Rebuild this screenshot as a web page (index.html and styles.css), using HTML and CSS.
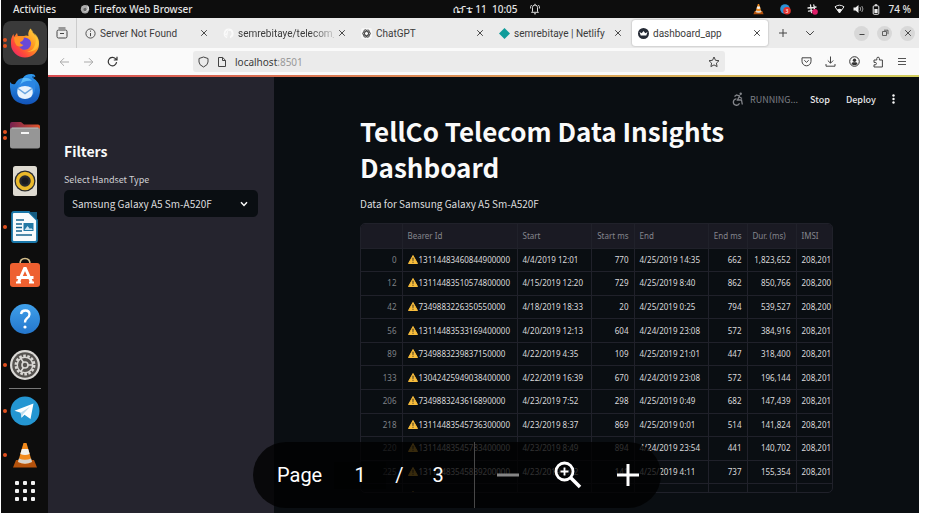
FILE: index.html
```html
<!DOCTYPE html>
<html lang="en">
<head>
<meta charset="utf-8">
<title>dashboard_app</title>
<link rel="stylesheet" href="styles.css">
</head>
<body>
<svg class="defs" aria-hidden="true">
  <defs>
    <symbol id="warn" viewBox="0 0 20 18"><path d="M10 1 19 17H1Z" fill="#f8bd3c" stroke="#f8bd3c" stroke-width="2" stroke-linejoin="round"/><path d="M8.800 5.500h2.400l-.4 6.500H9.200zM9 13.500h2v2H9z" fill="#3a3420"/></symbol>
    <symbol id="x" viewBox="0 0 8 8"><path d="M1.200 1.200l5.600 5.600M6.800 1.200 1.200 6.800" stroke="#4a4a4a" stroke-width="1" fill="none"/></symbol>
    <linearGradient id="fx" x1="1" y1="0" x2="0" y2="1"><stop offset="0" stop-color="#ffe14a"/><stop offset=".4" stop-color="#ff9a1f"/><stop offset=".7" stop-color="#ff4a3a"/><stop offset="1" stop-color="#e5187c"/></linearGradient>
    <linearGradient id="tb" x1="0" y1="0" x2="0" y2="1"><stop offset="0" stop-color="#2f9bf0"/><stop offset="1" stop-color="#1253b8"/></linearGradient>
    <linearGradient id="fold" x1="0" y1="0" x2="1" y2="0"><stop offset="0" stop-color="#75204f"/><stop offset="1" stop-color="#e2562b"/></linearGradient>
    <linearGradient id="blue" x1="0" y1="0" x2="0" y2="1"><stop offset="0" stop-color="#3fa0ea"/><stop offset="1" stop-color="#2476cc"/></linearGradient>
    <symbol id="cone" viewBox="0 0 26 28"><path d="M4 19h18l3 7.500H1z" fill="#b5520c"/><path d="M11.500 2h3L20 21q-7 3.500-14 0z" fill="#f28a1c"/><path d="M9.800 8h6.400l1.500 5q-4.700 2-9.400 0z" fill="#f1f1ee"/><path d="M6.900 17.500q6.100 2.500 12.200 0L20 21q-7 3.500-14 0z" fill="#d7d3cd"/></symbol>
  </defs>
</svg>
<div class="desktop">
  <header class="topbar">
    <div class="topbar-left">
      <span>Activities</span>
      <span class="app-name"><svg width="10" height="10" viewBox="0 0 10 10"><circle cx="5" cy="5.300" r="4.200" fill="#a9a9a9"/><path d="M.8 1.500 3 3l2 .5-2 2 2 2.500 3-1.500L7.500 3 6.500.500 9 3v3" fill="#d8d8d8"/><circle cx="5" cy="5.500" r="1.700" fill="#666"/></svg>Firefox Web Browser</span>
    </div>
    <div class="clock"><span>ሴፕቴ 11&nbsp; 10:05</span><svg width="10" height="12" viewBox="0 0 10 12" fill="none" stroke="#ddd" stroke-width="1"><path d="M2.500 8.500V4.500a2.500 2.500 0 0 1 5 0v4l1 .8h-7zM4 10.800h2M.6 5.500V3.500l1-1.500M9.400 5.500V3.500L8.400 2M5 2V.800"/></svg></div>
    <div class="tray">
      <svg class="tray-app" width="11" height="12"><use href="#cone"/></svg>
      <svg class="tray-app" width="11" height="11" viewBox="0 0 11 11"><circle cx="5" cy="5" r="4.800" fill="#2b93d6"/><circle cx="7" cy="6.800" r="3.800" fill="#e4342f"/><text x="7" y="9" font-size="5" fill="#fff" text-anchor="middle">3</text></svg>
      <svg class="tray-app" width="11" height="11" viewBox="0 0 11 11" stroke="#e8e8e8" stroke-width="1.300" stroke-linecap="round"><path d="M3.500 1l1 7.500M6.800 1l.7 4M1 4l8-1M1.500 7.200l4-.5"/><circle cx="8" cy="7.800" r="2.200" fill="#e01e6a" stroke="#e01e6a"/></svg>
      <svg width="11" height="10" viewBox="0 0 11 10"><path d="M1 2.800q4.500-3.200 9 0L5.500 9z" fill="none" stroke="#eee"/><path d="M3 5.500q2.500-1.600 5 0L5.500 9z" fill="#eee"/></svg>
      <svg width="11" height="10" viewBox="0 0 11 10"><path d="M.500 3.500h2L5.500 1v8l-3-2.500h-2z" fill="#eee"/><path d="M7 3q1.500 2 0 4M8.800 2q2.300 3 0 6" fill="none" stroke="#aaa" stroke-width=".9"/></svg>
      <svg width="8" height="11" viewBox="0 0 8 11"><rect x="1.200" y="1.800" width="5.600" height="8.500" rx="1" fill="none" stroke="#eee"/><path d="M2.800.300h2.400v1.500H2.800zM2.400 5h3.200v4H2.400z" fill="#eee"/></svg>
      <span>74 %</span>
    </div>
  </header>

  <nav class="dock" aria-label="Dock">
    <div class="dock-item focused two"><svg width="30" height="30" viewBox="0 0 30 30"><path d="M20.500.500Q22 4 25 7q4 3.500 4 9a14 13.500 0 0 1-28 0q-.5-6 2.500-10l.5 3 3-4 .8 3L14 8q2-1 4.500 0Q17.500 4 20.500.500z" fill="url(#fx)"/><path d="M9 12q6-5 11 0 2 3 .5 6-3 5-8 3.500Q7 19 9 12z" fill="#6a49d6"/><path d="M4 9.500q6-2 10 .500-1 3.500-4 4 0 2 3.500 3-3 3-7 .500Q4 14 4 9.500z" fill="#ff9126"/><path d="M20.500.500Q28 8 25 17q-2 6-8 6.500 8 1 11-5 3-8-4-13.500-3-2-3.500-4.500z" fill="#ffc936" opacity=".75"/></svg></div>
    <div class="dock-item"><svg width="32" height="32" viewBox="0 0 32 32"><path d="M1 9q2 3 5 2Q9 5 14 5q2-4 8.500-4 3 0 4 2.200L24 5q7 4 7 12 0 14-14 14.500Q3 30 1.500 18q-.8-4-.5-9z" fill="url(#tb)"/><path d="M14 5q9-3 12 6 1.500 8-4 13-9 4-13-3-2-9 5-16z" fill="#2b86e4"/><path d="M14 5q6-1 9 3-8-1-12 4z" fill="#5cbbfa"/><path d="M9 15q7-4 14 0 2 5-1 9-6 4-12 0-3-4-1-9z" fill="#e8f2fc"/><path d="M9 15.500l7 5 7-5" fill="none" stroke="#6aa5df" stroke-width="1.500"/><circle cx="24" cy="4" r=".8" fill="#0d2d66"/></svg></div>
    <div class="dock-item two"><svg width="32" height="28" viewBox="0 0 32 28"><path d="M1 3q0-2 2-2h9l3 2.500h14q2 0 2 2V15H1z" fill="url(#fold)"/><rect x="1" y="6.500" width="30" height="21" rx="2.500" fill="#969696"/><path d="M3 7.200h26" stroke="#b5b5b5"/><rect x="12" y="11" width="8" height="2" fill="#f5f5f5"/></svg></div>
    <div class="dock-item"><svg width="26" height="32" viewBox="0 0 26 32"><rect x="1" y="1" width="24" height="30" rx="2.500" fill="#dedad0"/><circle cx="13" cy="16" r="10.500" fill="#282a30"/><circle cx="13" cy="16" r="7.500" fill="none" stroke="#eab92b" stroke-width="3.500"/><circle cx="13" cy="16" r="3.500" fill="#191a20"/></svg></div>
    <div class="dock-item one"><svg width="28" height="32" viewBox="0 0 28 32"><path d="M3 1h15l8 8v20q0 2-2 2H3q-2 0-2-2V3q0-2 2-2z" fill="#f8fbfc" stroke="#1a78aa" stroke-width="1.800"/><path d="M18 1h8v8z" fill="#155b80"/><path d="M5 9h8M5 13h6M5 16.500h6M5 20h6M5 24h16" stroke="#17658f" stroke-width="1.700"/><rect x="12.500" y="12" width="10" height="8" fill="#2379a5"/><path d="M13.500 19l3-4 2.500 3 1-1 2 2z" fill="#cfe7f4"/></svg></div>
    <div class="dock-item"><svg width="32" height="32" viewBox="0 0 32 32"><path d="M11 7q0-5.500 5-5.500T21 7" fill="none" stroke="#d3bd8a" stroke-width="1.600"/><rect x="1" y="6" width="30" height="24" rx="3" fill="#ee6030"/><path d="M16 10.500 9.500 25M16 10.500 22.500 25M7.500 20.500h17" stroke="#fff" stroke-width="3" fill="none"/><path d="M7 25.500h5M20 25.500h5" stroke="#fff" stroke-width="2"/></svg></div>
    <div class="dock-item"><svg width="32" height="32" viewBox="0 0 32 32"><circle cx="16" cy="16" r="15" fill="url(#blue)"/><path d="M12 11q.5-3.500 4.300-3.500 4.200 0 4.200 3.700 0 2.300-2.700 4.300-1.800 1.500-1.800 4" fill="none" stroke="#fff" stroke-width="2.300"/><circle cx="16" cy="24" r="1.600" fill="#fff"/></svg></div>
    <div class="dock-item one"><svg width="32" height="32" viewBox="0 0 32 32"><circle cx="16" cy="16" r="15" fill="#dad8d5"/><circle cx="16" cy="16" r="12.800" fill="#55524f"/><circle cx="16" cy="16" r="9.200" fill="none" stroke="#dad8d5" stroke-width="2.500" stroke-dasharray="2.600 1.530"/><circle cx="16" cy="16" r="7.700" fill="none" stroke="#dad8d5" stroke-width="1.400"/><circle cx="16" cy="16" r="3" fill="none" stroke="#dad8d5" stroke-width="1.600"/><path d="M19 16h5M14.500 13.500 11.500 9M14.500 18.500 11.500 23" stroke="#dad8d5" stroke-width="1.500"/></svg></div>
    <hr class="dock-rule">
    <div class="dock-item one"><svg width="32" height="32" viewBox="0 0 32 32"><circle cx="16" cy="16" r="14.500" fill="#2496d2"/><path d="M5.500 15.800 24.500 8.500 21.500 24l-6-4.200-3 3-.8-5z" fill="#fff"/><path d="M11.700 17.800l9.500-6.300-7 7.500-1.700 3.800z" fill="#bcdcee"/></svg></div>
    <div class="dock-item one"><svg width="26" height="28"><use href="#cone"/></svg></div>
    <button class="apps" type="button" aria-label="Show applications"><i></i><i></i><i></i><i></i><i></i><i></i><i></i><i></i><i></i></button>
  </nav>

  <section class="browser">
    <div class="tabs">
      <button class="list-tabs" type="button" aria-label="List all tabs"><svg width="12" height="12" viewBox="0 0 12 12" fill="none" stroke="#444"><path d="M2.500 1h7" /><rect x="1" y="3" width="10" height="8" rx="1.500"/><path d="M4 6.500h4"/></svg></button>
      <div class="tab"><svg width="11" height="11" viewBox="0 0 11 11" fill="none" stroke="#444"><circle cx="5.500" cy="5.500" r="4.600" stroke-width=".9"/><path d="M5.500 5v3.200M5.500 2.600v1.100"/></svg><span class="tab-title">Server Not Found</span><button type="button" aria-label="Close tab"><svg width="8" height="8"><use href="#x"/></svg></button></div>
      <div class="tab"><svg width="11" height="11" viewBox="0 0 11 11"><path d="M5.500.500a5 5 0 0 0-1.500 9.700V8.600Q2.500 8.500 2.300 7.500M4 10.300V8Q2.500 7.300 2.500 5.500q0-2 1-2.500h4q1 .5 1 2.500T7 8v2.300A5 5 0 0 0 5.500.500z" fill="#fafafa"/></svg><span class="tab-title faded">semrebitaye/telecom_</span><button type="button" aria-label="Close tab"><svg width="8" height="8"><use href="#x"/></svg></button></div>
      <div class="tab"><svg width="11" height="11" viewBox="0 0 11 11"><rect width="11" height="11" rx="2" fill="#f6f6f6"/><g fill="none" stroke="#444" stroke-width=".9"><ellipse cx="5.500" cy="5.500" rx="4" ry="2"/><ellipse cx="5.500" cy="5.500" rx="4" ry="2" transform="rotate(60 5.500 5.500)"/><ellipse cx="5.500" cy="5.500" rx="4" ry="2" transform="rotate(120 5.500 5.500)"/></g></svg><span class="tab-title">ChatGPT</span><button type="button" aria-label="Close tab"><svg width="8" height="8"><use href="#x"/></svg></button></div>
      <div class="tab"><svg width="11" height="11" viewBox="0 0 11 11"><path d="M5.500 0 11 5.500 5.500 11 0 5.500z" fill="#109c9a"/></svg><span class="tab-title">semrebitaye | Netlify</span><button type="button" aria-label="Close tab"><svg width="8" height="8"><use href="#x"/></svg></button></div>
      <div class="tab active"><svg width="11" height="11" viewBox="0 0 11 11"><circle cx="5.500" cy="5.500" r="5.500" fill="#252a35"/><path d="M1.500 4l2.200 1.200L5.500 3l1.800 2.200L9.500 4 8.300 7.500H2.700z" fill="#fff"/></svg><span class="tab-title">dashboard_app</span><button type="button" aria-label="Close tab"><svg width="8" height="8"><use href="#x"/></svg></button></div>
      <button class="tab-tool" type="button" aria-label="New tab"><svg width="10" height="10" viewBox="0 0 10 10" stroke="#444"><path d="M5 1v8M1 5h8"/></svg></button>
      <button class="tab-tool" type="button" aria-label="Tab menu"><svg width="10" height="10" viewBox="0 0 10 10" fill="none" stroke="#444"><path d="M1.200 3.200 5 7l3.800-3.800"/></svg></button>
      <div class="window-buttons">
        <button type="button" aria-label="Minimize"><svg width="8" height="8" viewBox="0 0 8 8" stroke="#444"><path d="M1.500 5.500h5"/></svg></button>
        <button type="button" aria-label="Restore"><svg width="8" height="8" viewBox="0 0 8 8" fill="none" stroke="#555" stroke-width=".9"><path d="M1.500 2.500h4v4h-4zM3 1.200h4v4"/></svg></button>
        <button type="button" aria-label="Close"><svg width="8" height="8"><use href="#x"/></svg></button>
      </div>
    </div>
    <div class="toolbar">
      <div class="nav-buttons">
        <button type="button" aria-label="Back"><svg width="11" height="10" viewBox="0 0 11 10" fill="none" stroke="#aaa"><path d="M10 5H1M5 1.200 1.200 5 5 8.800"/></svg></button>
        <button type="button" aria-label="Forward"><svg width="11" height="10" viewBox="0 0 11 10" fill="none" stroke="#aaa"><path d="M1 5h9M6 1.200 9.800 5 6 8.800"/></svg></button>
        <button type="button" aria-label="Reload"><svg width="11" height="11" viewBox="0 0 11 11" fill="none" stroke="#333" stroke-width="1.200"><path d="M9.600 6.200A4.200 4.200 0 1 1 8.500 2.700L9.800 4M10 .800V4H6.800"/></svg></button>
      </div>
      <div class="urlbar">
        <svg width="11" height="12" viewBox="0 0 11 12" fill="none" stroke="#444"><path d="M5.500 1 10 2.500V6q0 3-4.500 5Q1 9 1 6V2.500z"/></svg>
        <svg width="10" height="12" viewBox="0 0 10 12" fill="none" stroke="#444"><path d="M1.500 1.500h4.200L8.500 4.300v6.200h-7zM5.500 1.500v3h3"/></svg>
        <a class="url" href="#">localhost<span>:8501</span></a>
        <svg width="12" height="12" viewBox="0 0 12 12" fill="none" stroke="#444"><path d="M6 1l1.500 3.300 3.500.4-2.600 2.400.7 3.500L6 8.900l-3.100 1.700.7-3.500L1 4.700l3.500-.4z"/></svg>
      </div>
      <div class="tool-buttons">
        <button type="button" aria-label="Pocket"><svg width="11" height="11" viewBox="0 0 11 11" fill="none" stroke="#444"><path d="M1 1.800h9v3.500a4.500 4.500 0 0 1-9 0zM3.300 4.300l2.200 2 2.200-2"/></svg></button>
        <button type="button" aria-label="Downloads"><svg width="11" height="11" viewBox="0 0 11 11" fill="none" stroke="#444"><path d="M5.500.500v6.500M2.800 4.500 5.500 7.200l2.700-2.700M1 8v2.200h9V8"/></svg></button>
        <button type="button" aria-label="Account"><svg width="11" height="11" viewBox="0 0 11 11"><circle cx="5.500" cy="5.500" r="4.800" fill="none" stroke="#333"/><circle cx="5.500" cy="4.200" r="1.700" fill="#333"/><path d="M2.500 8q.2-1.700 1.500-1.700h3Q8.300 6.300 8.500 8 5.500 10.500 2.500 8z" fill="#333"/></svg></button>
        <button type="button" aria-label="Extensions"><svg width="11" height="12" viewBox="0 0 11 12" fill="none" stroke="#444"><path d="M1 4h2.800V2.500a1.300 1.300 0 0 1 2.600 0V4h3v7H1V8.800h1.200a1.200 1.200 0 0 0 0-2.400H1z"/></svg></button>
        <button type="button" aria-label="Menu"><svg width="10" height="10" viewBox="0 0 10 10" stroke="#555"><path d="M1 1.500h8M1 4.500h8M1 7.500h8"/></svg></button>
      </div>
    </div>

    <div class="page">
      <aside class="sidebar">
        <h2>Filters</h2>
        <label for="handset">Select Handset Type</label>
        <div class="select">
          <select id="handset"><option>Samsung Galaxy A5 Sm-A520F</option></select>
          <svg width="8" height="6" viewBox="0 0 8 6" fill="none" stroke="#fafafa" stroke-width="1.500"><path d="M1 1.200 4 4.400l3-3.200"/></svg>
        </div>
      </aside>
      <main class="main">
        <div class="status">
          <svg width="12" height="14" viewBox="0 0 12 14" fill="none" stroke="#85878c" stroke-width="1.300"><circle cx="8.700" cy="1.800" r="1.200" fill="#85878c" stroke="none"/><path d="M2.500 4.500 4.500 3l3 1-2 4h4l.8 4.500M7.500 5l2.500 1.500M4.500 6.800a3.200 3.200 0 1 0 3 4.500"/></svg>
          <span class="running">RUNNING...</span>
          <button type="button">Stop</button>
          <button type="button">Deploy</button>
          <button type="button" aria-label="More"><svg width="3" height="10" viewBox="0 0 3 10" fill="#fafafa"><circle cx="1.500" cy="1.500" r="1.200"/><circle cx="1.500" cy="5" r="1.200"/><circle cx="1.500" cy="8.500" r="1.200"/></svg></button>
        </div>
        <div class="content">
          <h1>TellCo Telecom Data Insights Dashboard</h1>
          <p>Data for Samsung Galaxy A5 Sm-A520F</p>
          <div class="table-wrap">
            <table>
              <colgroup><col class="c-index"><col class="c-bearer"><col class="c-date"><col class="c-start-ms"><col class="c-date"><col class="c-end-ms"><col class="c-dur"><col class="c-imsi"></colgroup>
              <thead><tr><th></th><th>Bearer Id</th><th>Start</th><th class="num">Start ms</th><th>End</th><th class="num">End ms</th><th>Dur. (ms)</th><th>IMSI</th></tr></thead>
              <tbody>
                <tr><td>0</td><td><svg><use href="#warn"/></svg>13114483460844900000</td><td>4/4/2019 12:01</td><td>770</td><td>4/25/2019 14:35</td><td>662</td><td>1,823,652</td><td>208,201</td></tr>
                <tr><td>12</td><td><svg><use href="#warn"/></svg>13114483510574800000</td><td>4/15/2019 12:20</td><td>729</td><td>4/25/2019 8:40</td><td>862</td><td>850,766</td><td>208,200</td></tr>
                <tr><td>42</td><td><svg><use href="#warn"/></svg>7349883226350550000</td><td>4/18/2019 18:33</td><td>20</td><td>4/25/2019 0:25</td><td>794</td><td>539,527</td><td>208,200</td></tr>
                <tr><td>56</td><td><svg><use href="#warn"/></svg>13114483533169400000</td><td>4/20/2019 12:13</td><td>604</td><td>4/24/2019 23:08</td><td>572</td><td>384,916</td><td>208,201</td></tr>
                <tr><td>89</td><td><svg><use href="#warn"/></svg>7349883239837150000</td><td>4/22/2019 4:35</td><td>109</td><td>4/25/2019 21:01</td><td>447</td><td>318,400</td><td>208,201</td></tr>
                <tr><td>133</td><td><svg><use href="#warn"/></svg>13042425949038400000</td><td>4/22/2019 16:39</td><td>670</td><td>4/24/2019 23:08</td><td>572</td><td>196,144</td><td>208,201</td></tr>
                <tr><td>206</td><td><svg><use href="#warn"/></svg>7349883243616890000</td><td>4/23/2019 7:52</td><td>298</td><td>4/25/2019 0:49</td><td>682</td><td>147,439</td><td>208,201</td></tr>
                <tr><td>218</td><td><svg><use href="#warn"/></svg>13114483545736300000</td><td>4/23/2019 8:37</td><td>869</td><td>4/25/2019 0:01</td><td>514</td><td>141,824</td><td>208,201</td></tr>
                <tr><td>220</td><td><svg><use href="#warn"/></svg>13114483545783400000</td><td>4/23/2019 8:49</td><td>894</td><td>4/24/2019 23:54</td><td>441</td><td>140,702</td><td>208,201</td></tr>
                <tr><td>225</td><td><svg><use href="#warn"/></svg>13114483545839200000</td><td>4/23/2019 9:02</td><td>141</td><td>4/25/2019 4:11</td><td>737</td><td>155,354</td><td>208,201</td></tr>
                <tr><td></td><td><svg><use href="#warn"/></svg></td><td></td><td></td><td></td><td></td><td></td><td></td></tr>
              </tbody>
            </table>
          </div>
        </div>
      </main>
    </div>
  </section>

  <div class="pager">
    <div class="pager-pages"><label for="page-number">Page</label><input id="page-number" type="text" value="1"><span class="slash">/</span><span class="total">3</span></div>
    <div class="pager-zoom">
      <button type="button" aria-label="Zoom out"><svg width="22" height="22" viewBox="0 0 22 22"><path d="M0 11h22" stroke="#858585" stroke-width="3"/></svg></button>
      <button type="button" aria-label="Reset zoom"><svg width="28" height="28" viewBox="0 0 28 28" fill="none" stroke="#fff"><circle cx="10.500" cy="10.500" r="8.500" stroke-width="2.800"/><path d="M17 17l9 9" stroke-width="3.500"/><path d="M10.500 6.500v8M6.500 10.500h8" stroke-width="1.800"/></svg></button>
      <button type="button" aria-label="Zoom in"><svg width="22" height="22" viewBox="0 0 22 22"><path d="M0 11h22M11 0v22" stroke="#fff" stroke-width="3"/></svg></button>
    </div>
  </div>
</div>
</body>
</html>
```
FILE: styles.css
```css
* { box-sizing: border-box; }

body {
  margin: 0;
  padding: 0 6px 0 1px;
  background: #fff;
  font-family: "Noto Sans", "Open Sans", sans-serif;
  font-size: 10px;
}

button {
  display: flex;
  align-items: center;
  justify-content: center;
  margin: 0;
  padding: 0;
  border: 0;
  background: none;
  color: inherit;
  font: inherit;
}

svg { display: block; flex: none; }
.defs { position: absolute; width: 0; height: 0; }

.desktop {
  position: relative;
  display: grid;
  grid-template: 18px minmax(0, 1fr) / 47px minmax(0, 1fr);
  height: 100vh;
  overflow: hidden;
  background: #0d0d0d;
}

/* System bar */
.topbar {
  grid-column: 1 / -1;
  display: flex;
  align-items: center;
  color: #e4e4e4;
  font-weight: 500;
}
.topbar-left { display: flex; flex: 451 1 0; gap: 24px; padding-left: 12px; }
.app-name { display: flex; align-items: center; gap: 4px; }
.clock { display: flex; align-items: center; gap: 12px; white-space: nowrap; }
.tray {
  display: flex;
  flex: 381 1 0;
  align-items: center;
  justify-content: flex-end;
  gap: 8px;
  padding-right: 8px;
}
.tray-app { margin-right: 8px; }

/* Dock */
.dock {
  display: flex;
  flex-direction: column;
  padding-top: 2px;
}
.dock-item {
  position: relative;
  display: flex;
  flex: 0 0 46px;
  align-items: center;
  justify-content: center;
}
.dock-item.focused { flex-basis: 44px; margin: 1px 1px 1px 2px; border-radius: 8px; background: #3a3a3a; }
.one::before, .two::before, .two::after {
  content: "";
  position: absolute;
  top: calc(50% - 2px);
  left: 2px;
  width: 4px;
  height: 4px;
  border-radius: 50%;
  background: #e2511f;
}
.two::before { top: calc(50% - 5px); }
.two::after { top: calc(50% + 1px); }
.focused::before, .focused::after { left: 0; }
.dock-rule { width: 32px; height: 1px; margin: 0 auto; border: 0; background: #777; }
.dock-rule ~ .dock-item { flex-basis: 44px; }
.apps {
  display: grid;
  grid-template-columns: repeat(3, 4px);
  gap: 4px;
  padding: 4px 0;
}
.apps i { width: 4px; height: 4px; border-radius: 1px; background: #f2f2f2; }

/* Browser chrome */
.browser {
  display: flex;
  flex-direction: column;
  min-height: 0;
  background: #fafafa;
  color: #3b3b3b;
}
.tabs {
  display: flex;
  flex: 0 0 30px;
  align-items: center;
  background: #ebebeb;
  font-family: Roboto, "Noto Sans", sans-serif;
}
.list-tabs { width: 29px; height: 100%; border-right: 1px solid #ccc; }
.tab {
  display: flex;
  flex: 0 1 138px;
  align-items: center;
  gap: 4px;
  min-width: 0;
  padding: 0 7px 0 8px;
}
.tab-title { flex: 1; min-width: 0; overflow: hidden; white-space: nowrap; }
.faded { mask-image: linear-gradient(90deg, #000 75%, rgba(0, 0, 0, .2)); }
.tab.active {
  flex-basis: 136px;
  height: 26px;
  margin: 0 1px 0 3px;
  padding-left: 6px;
  border-radius: 3px;
  background: #fff;
  box-shadow: 0 0 2px #999;
}
.tab-tool { width: 27px; height: 26px; }
.window-buttons { display: flex; gap: 8px; margin-left: auto; padding-right: 4px; }
.window-buttons button { width: 15px; height: 15px; border-radius: 50%; background: #d8d8d8; }

.toolbar {
  display: flex;
  flex: 0 0 27px;
  align-items: center;
}
.nav-buttons { display: flex; flex: 0 0 145px; gap: 13px; padding-left: 11px; }
.urlbar {
  display: flex;
  flex: 1;
  align-items: center;
  gap: 8px;
  height: 21px;
  padding: 0 5px;
  border-radius: 3px;
  background: #ebebeb;
}
.url { flex: 1; color: #3b3b3b; text-decoration: none; }
.url span { color: #999; }
.tool-buttons { display: flex; flex: 0 0 194px; justify-content: flex-end; gap: 13px; padding-right: 12px; }

/* Dashboard */
.page {
  display: grid;
  grid-template-columns: 226px minmax(0, 1fr);
  flex: 1;
  min-height: 0;
  border-top: 2px solid;
  border-image: linear-gradient(90deg, #d94b50, #dd9b55 55%, #d3cf5d) 1;
  background: #0a0e12;
  color: #fafafa;
  font-family: "Noto Sans CJK SC", "Noto Sans", sans-serif;
}
.sidebar { padding: 62px 16px 0; background: #25242e; }
.sidebar h2 { margin: 0 0 10px; font-size: 14px; font-weight: 600; line-height: 24px; }
.sidebar label { display: block; margin-bottom: 3px; color: #d0d0d3; font-size: 9px; line-height: 14px; }
.select { position: relative; }
.select select {
  width: 100%;
  height: 27px;
  padding: 0 24px 0 8px;
  border: 0;
  border-radius: 5px;
  appearance: none;
  background: #0a0e12;
  color: #dcdcde;
  font: 10px "Noto Sans CJK SC", "Noto Sans", sans-serif;
}
.select svg { position: absolute; top: 11px; right: 10px; }

.main { display: flex; flex-direction: column; min-width: 0; min-height: 0; }
.status {
  display: flex;
  flex: 0 0 36px;
  align-items: center;
  justify-content: flex-end;
  padding: 8px 24px 0 0;
  color: #e6e6e8;
  font-size: 9px;
  font-weight: 500;
}
.status button { margin-left: 16px; }
.running { margin-left: 6px; margin-right: -4px; color: #7c7f85; font-weight: 400; }
.content {
  display: flex;
  flex: 1;
  flex-direction: column;
  min-height: 0;
  padding: 0 86px 20px;
}
h1 { margin: 0 0 11px; font-size: 26px; font-weight: 700; line-height: 36px; }
.content p { margin: 0 0 11px; color: #dcdcde; font-size: 10px; line-height: 16px; }
.table-wrap {
  flex: 1;
  min-height: 0;
  overflow: hidden;
  border: 1px solid #20212a;
  border-radius: 5px;
}
table {
  width: 100%;
  height: 284px;
  table-layout: fixed;
  border-collapse: collapse;
  color: #dadadc;
  font-family: "Noto Sans", sans-serif;
  font-size: 8px;
  line-height: 12px;
}
.c-index { width: 41px; }
.c-bearer { width: 115px; }
.c-date { width: 74px; }
.c-start-ms { width: 43px; }
.c-end-ms { width: 39px; }
.c-dur { width: 49px; }
th, td {
  padding: 0 5px;
  border-right: 1px solid #20212a;
  border-bottom: 1px solid #20212a;
  text-align: left;
  white-space: nowrap;
}
th { height: 24px; background: #1a1a23; color: #85868d; font-weight: 400; }
th:last-child, td:last-child { border-right: 0; overflow: hidden; padding-right: 0; }
.num, td:nth-child(1), td:nth-child(4), td:nth-child(6), td:nth-child(7) { text-align: right; }
td:first-child { color: #7f8187; }
td svg { display: inline-block; width: 10px; height: 9px; margin-right: 1px; vertical-align: -1px; }

/* Document viewer controls */
.pager {
  position: absolute;
  bottom: 5px;
  left: calc(50% - 207px);
  display: flex;
  width: 408px;
  height: 66px;
  overflow: hidden;
  border-radius: 33px;
  background: rgba(0, 0, 0, .78);
  color: #fff;
  font-family: Roboto, "Noto Sans", sans-serif;
  font-size: 20px;
}
.pager-pages {
  display: flex;
  flex: 0 0 222px;
  align-items: center;
  padding-left: 24px;
  border-right: 1px solid #484848;
}
.pager input {
  width: 52px;
  height: 27px;
  margin-left: 12px;
  padding: 0;
  border: 0;
  background: rgba(0, 0, 0, .3);
  color: #fff;
  font: inherit;
  text-align: center;
}
.slash { margin-left: 9px; }
.total { margin-left: 29px; }
.pager-zoom { display: flex; flex: 1; align-items: center; gap: 35px; padding-left: 22px; }
```
